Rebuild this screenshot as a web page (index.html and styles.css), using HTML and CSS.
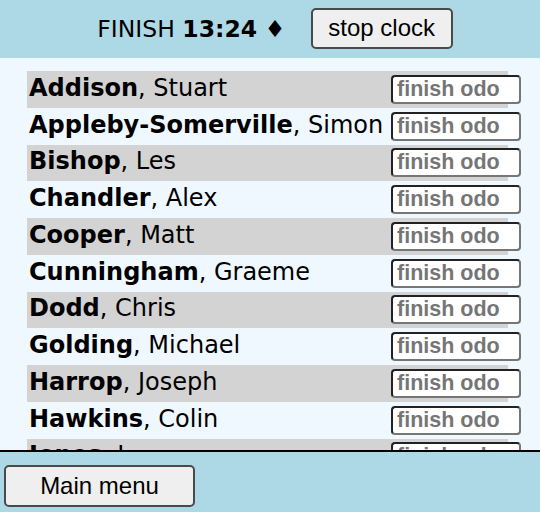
FILE: index.html
```html
<!DOCTYPE html>
<html>
<head>
<meta charset="utf-8">
<link rel="stylesheet" href="styles.css">
</head>
<body>
<header class="top">
  <span class="clock">FINISH <b>13:24</b> &#9830;</span>
  <button class="btn stop">stop clock</button>
</header>
<main class="list">
  <div class="row"><span class="name"><b>Addison</b>, Stuart</span><input class="odo" placeholder="finish odo"></div>
  <div class="row"><span class="name"><b>Appleby-Somerville</b>, Simon</span><input class="odo" placeholder="finish odo"></div>
  <div class="row"><span class="name"><b>Bishop</b>, Les</span><input class="odo" placeholder="finish odo"></div>
  <div class="row"><span class="name"><b>Chandler</b>, Alex</span><input class="odo" placeholder="finish odo"></div>
  <div class="row"><span class="name"><b>Cooper</b>, Matt</span><input class="odo" placeholder="finish odo"></div>
  <div class="row"><span class="name"><b>Cunningham</b>, Graeme</span><input class="odo" placeholder="finish odo"></div>
  <div class="row"><span class="name"><b>Dodd</b>, Chris</span><input class="odo" placeholder="finish odo"></div>
  <div class="row"><span class="name"><b>Golding</b>, Michael</span><input class="odo" placeholder="finish odo"></div>
  <div class="row"><span class="name"><b>Harrop</b>, Joseph</span><input class="odo" placeholder="finish odo"></div>
  <div class="row"><span class="name"><b>Hawkins</b>, Colin</span><input class="odo" placeholder="finish odo"></div>
  <div class="row"><span class="name"><b>Jones</b>, J</span><input class="odo" placeholder="finish odo"></div>
  <div class="row"><span class="name"><b>Kelly</b>, Sean</span><input class="odo" placeholder="finish odo"></div>
</main>
<footer class="bottom">
  <button class="btn menu">Main menu</button>
</footer>
</body>
</html>
```
FILE: styles.css
```css
html, body {
  margin: 0;
  padding: 0;
  height: 512px;
  overflow: hidden;
}
body {
  display: flex;
  flex-direction: column;
  font-family: "DejaVu Sans", Verdana, sans-serif;
  background: #f0f8ff;
}
.top {
  height: 58px;
  flex: none;
  background: #add8e6;
  display: flex;
  align-items: center;
  justify-content: center;
  gap: 25px;
  padding-left: 10px;
  box-sizing: border-box;
}
.clock {
  font-size: 23.5px;
  color: #000;
}
.btn {
  font-family: "Liberation Sans", Arial, sans-serif;
  font-size: 24px;
  color: #000;
  background: #efefef;
  border: 2px solid #4a4a4a;
  border-radius: 5px;
  padding: 0;
}
.stop {
  width: 142px;
  height: 41px;
  margin-top: -2px;
}
.list {
  flex: 1;
  overflow: hidden;
  padding: 13px 0 0 27px;
  background: #f0f8ff;
}
.row {
  width: 481px;
  height: 36.75px;
  display: grid;
  grid-template-columns: 364px 130px;
  align-items: center;
}
.row:nth-child(odd) {
  background: #d3d3d3;
}
.name {
  font-size: 24px;
  padding-left: 2px;
  white-space: nowrap;
  color: #000;
  margin-top: -3px;
}
.odo {
  box-sizing: border-box;
  width: 130px;
  height: 29px;
  margin: 0;
  padding: 0 4px;
  font-family: "Liberation Sans", Arial, sans-serif;
  font-weight: bold;
  font-size: 21.5px;
  background: #fff;
  border: 2px solid #767676;
  border-top-color: #222;
  border-left-color: #222;
  border-radius: 4px;
}
.odo::placeholder {
  color: #757575;
}
.bottom {
  flex: none;
  height: 60px;
  border-top: 2px solid #000;
  background: #add8e6;
  display: flex;
  align-items: flex-start;
  padding-left: 4px;
}
.menu {
  width: 191px;
  height: 42px;
  margin-top: 13px;
}
```
